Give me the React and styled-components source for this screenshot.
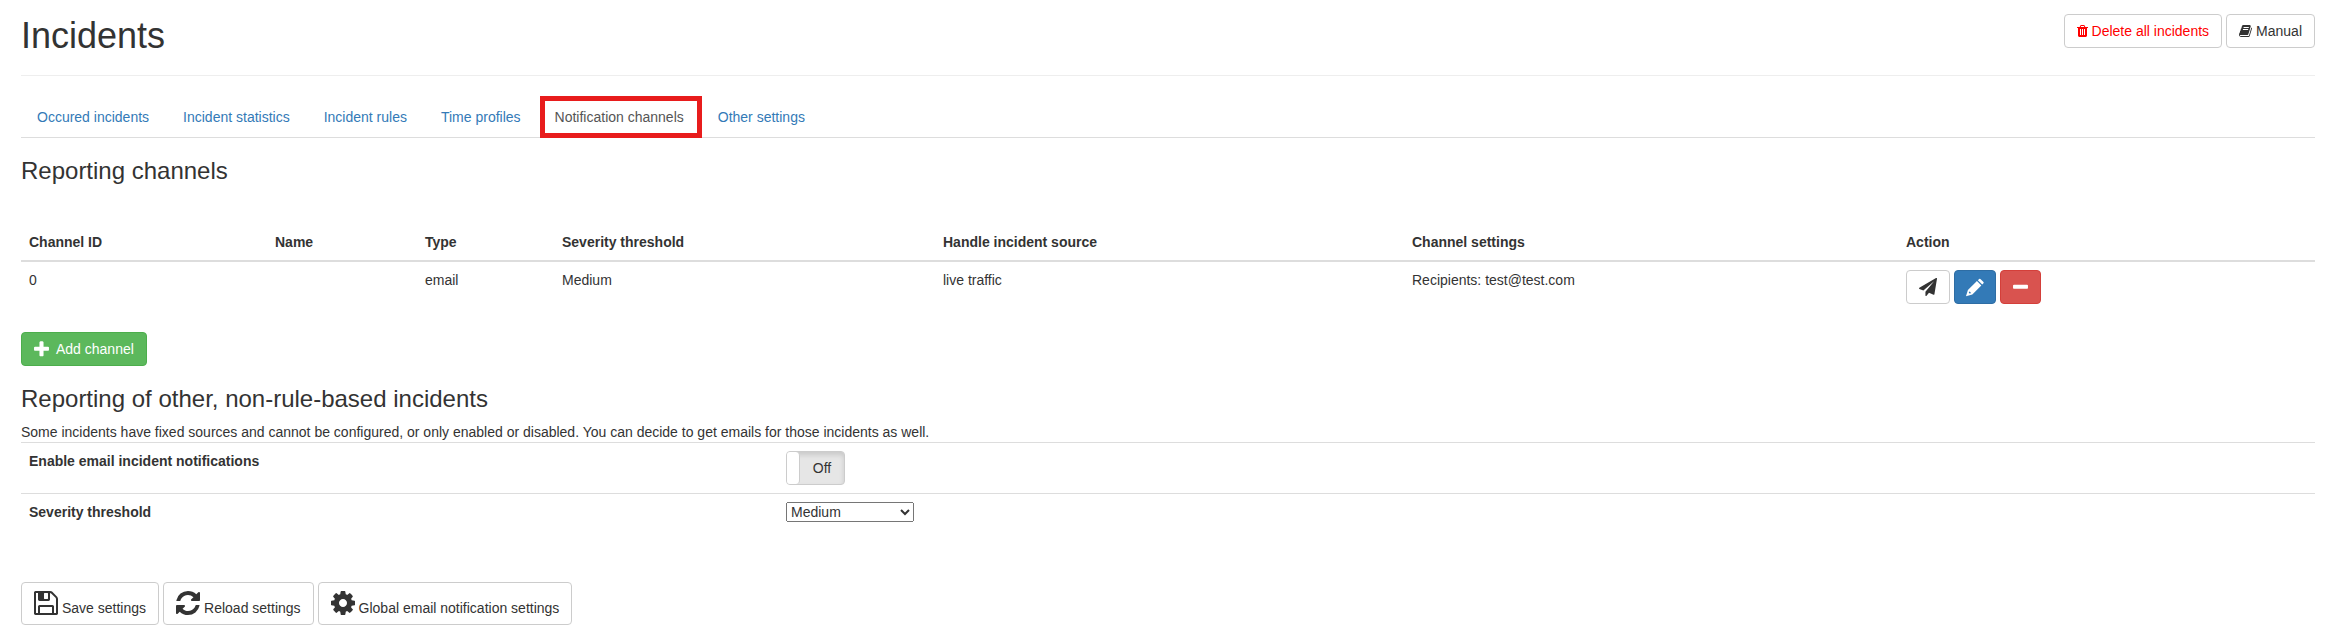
import React, { useState } from 'react';
import styled, { createGlobalStyle, css } from 'styled-components';

const GlobalStyle = createGlobalStyle`
  * {
    box-sizing: border-box;
  }
  body {
    margin: 0;
    background: #fff;
    color: #333;
    font-family: "Liberation Sans", Arial, sans-serif;
    font-size: 14px;
    line-height: 20px;
  }
`;

// [left edge, width, path] on the 1792 unit icon grid
const icons = {
  trash: [192, 1408, 'M704 1376v-704q0-14-9-23t-23-9h-64q-14 0-23 9t-9 23v704q0 14 9 23t23 9h64q14 0 23-9t9-23zm256 0v-704q0-14-9-23t-23-9h-64q-14 0-23 9t-9 23v704q0 14 9 23t23 9h64q14 0 23-9t9-23zm256 0v-704q0-14-9-23t-23-9h-64q-14 0-23 9t-9 23v704q0 14 9 23t23 9h64q14 0 23-9t9-23zm-544-992h448l-48-117q-7-9-17-11h-317q-10 2-17 11zm928 32v64q0 14-9 23t-23 9h-96v948q0 83-47 143.5t-113 60.5h-832q-66 0-113-58.5t-47-141.5v-952h-96q-14 0-23-9t-9-23v-64q0-14 9-23t23-9h309l70-167q15-37 54-63t79-26h320q40 0 79 26t54 63l70 167h309q14 0 23 9t9 23z'],
  book: [64, 1664, 'M1703 478q40 57 18 129l-275 906q-19 64-76.5 107.5t-122.5 43.5h-923q-77 0-148.5-53.5t-99.5-131.5q-24-67-2-127 0-4 3-27t4-37q1-8-3-21.5t-3-19.5q2-11 8-21t16.5-23.5 16.5-23.5q23-38 45-91.5t30-91.5q3-10 .5-30t-.5-28q3-11 17-28t17-23q21-36 42-92t25-90q1-9-2.5-32t.5-28q4-13 22-30.5t22-22.5q19-26 42.5-84.5t27.5-96.5q1-8-3-25.5t-2-26.5q2-8 9-18t18-23 17-21q8-12 16.5-30.5t15-35 16-36 19.5-32 26.5-23.5 36-11.5 47.5 5.5l-1 3q38-9 51-9h761q74 0 114 56t18 130l-274 906q-36 119-71.5 153.5t-128.5 34.5h-869q-27 0-38 15-11 16-1 43 24 70 144 70h923q29 0 56-15.5t35-41.5l300-987q7-22 5-57 38 15 59 43zm-1064 2q-4 13 2 22.5t20 9.5h608q13 0 25.5-9.5t16.5-22.5l21-64q4-13-2-22.5t-20-9.5h-608q-13 0-25.5 9.5t-16.5 22.5zm-83 256q-4 13 2 22.5t20 9.5h608q13 0 25.5-9.5t16.5-22.5l21-64q4-13-2-22.5t-20-9.5h-608q-13 0-25.5 9.5t-16.5 22.5z'],
  send: [0, 1792, 'M1764 11q33 24 27 64l-256 1536q-5 29-32 45-14 8-31 8-11 0-24-5l-453-185-242 295q-18 23-49 23-13 0-22-4-19-7-30.5-23.5t-11.5-36.5v-349l864-1059-1069 925-395-162q-37-14-40-55-2-40 32-59l1664-960q15-9 32-9 20 0 36 11z'],
  pencil: [128, 1536, 'M1170 190L1290 70Q1350 20 1415 70L1710 365Q1765 430 1710 490L1590 610ZM1085 275L1505 695L640 1560L30 1740L215 1130ZM340 1270L300 1400L375 1480L505 1440L455 1325Z'],
  minus: [192, 1408, 'M1600 736v192q0 40-28 68t-68 28h-1216q-40 0-68-28t-28-68v-192q0-40 28-68t68-28h1216q40 0 68 28t28 68z'],
  plus: [192, 1408, 'M1600 736v192q0 40-28 68t-68 28h-416v416q0 40-28 68t-68 28h-192q-40 0-68-28t-28-68v-416h-416q-40 0-68-28t-28-68v-192q0-40 28-68t68-28h416v-416q0-40 28-68t68-28h192q40 0 68 28t28 68v416h416q40 0 68 28t28 68z'],
  save: [128, 1536, 'M512 1536h768v-384h-768v384zm896 0h128v-896q0-14-10-38.5t-20-34.5l-281-281q-10-10-34-20t-39-10v416q0 40-28 68t-68 28h-576q-40 0-68-28t-28-68v-416h-128v1280h128v-416q0-40 28-68t68-28h832q40 0 68 28t28 68v416zm-384-928v-320q0-13-9.5-22.5t-22.5-9.5h-192q-13 0-22.5 9.5t-9.5 22.5v320q0 13 9.5 22.5t22.5 9.5h192q13 0 22.5-9.5t9.5-22.5zm640 32v928q0 40-28 68t-68 28h-1344q-40 0-68-28t-28-68v-1344q0-40 28-68t68-28h928q40 0 88 20t76 48l280 280q28 28 48 76t20 88z'],
  reload: [128, 1536, 'M1639 1056q0 5-1 7-64 268-268 434.5t-478 166.5q-146 0-282.5-55t-243.5-157l-129 129q-19 19-45 19t-45-19-19-45v-448q0-26 19-45t45-19h448q26 0 45 19t19 45-19 45l-137 137q71 66 161 102t187 36q134 0 250-65t186-179q11-17 53-117 8-23 30-23h192q13 0 22.5 9.5t9.5 22.5zm25-800v448q0 26-19 45t-45 19h-448q-26 0-45-19t-19-45 19-45l138-138q-148-137-349-137-134 0-250 65t-186 179q-11 17-53 117-8 23-30 23h-199q-13 0-22.5-9.5t-9.5-22.5v-7q65-268 270-434.5t480-166.5q146 0 284 55.5t245 156.5l130-129q19-19 45-19t45 19 19 45z'],
  cog: [128, 1536, 'M1152 896q0-106-75-181t-181-75-181 75-75 181 75 181 181 75 181-75 75-181zm512-109v222q0 12-8 23t-20 13l-185 28q-19 54-39 91 35 50 107 138 10 12 10 25t-9 23q-27 37-99 108t-94 71q-12 0-26-9l-138-108q-44 23-91 38-16 136-29 186-7 28-36 28h-222q-14 0-24.5-8.5t-11.5-21.5l-28-184q-49-16-90-37l-141 107q-10 9-25 9-14 0-25-11-126-114-165-168-7-10-7-23 0-12 8-23 15-21 51-66.5t54-70.5q-27-50-41-99l-183-27q-13-2-21-12.5t-8-23.5v-222q0-12 8-23t19-13l186-28q14-46 39-92-40-57-107-138-10-12-10-24 0-10 9-23 26-36 98.5-107.5t94.5-71.5q13 0 26 10l138 107q44-23 91-38 16-136 29-186 7-28 36-28h222q14 0 24.5 8.5t11.5 21.5l28 184q49 16 90 37l142-107q9-9 24-9 13 0 25 10 129 119 165 170 7 8 7 22 0 12-8 23-15 21-51 66.5t-54 70.5q26 50 41 98l183 28q13 2 21 12.5t8 23.5z'],
};

const Icon = ({ name, size = 14 }) => {
  const [left, width, path] = icons[name];
  return (
    <svg
      aria-hidden="true"
      width={Math.round((size * width) / 1792)}
      height={size}
      viewBox={`${left} 0 ${width} 1792`}
      fill="currentColor"
      fillRule="evenodd"
      overflow="visible"
    >
      <path d={path} />
    </svg>
  );
};

const tabs = [
  'Occured incidents',
  'Incident statistics',
  'Incident rules',
  'Time profiles',
  'Notification channels',
  'Other settings',
];

const channels = [
  { id: 0, name: '', type: 'email', severity: 'Medium', source: 'live traffic', settings: 'Recipients: test@test.com' },
];

const App = () => {
  const [activeTab, setActiveTab] = useState('Notification channels');
  const [enabled, setEnabled] = useState(false);
  const [severity, setSeverity] = useState('Medium');

  return (
    <Page>
      <GlobalStyle />
      <Header>
        <Title>Incidents</Title>
        <ButtonRow>
          <Button type="button" $variant="warning"><Icon name="trash" />Delete all incidents</Button>
          <Button type="button"><Icon name="book" />Manual</Button>
        </ButtonRow>
      </Header>

      <Tabs>
        {tabs.map((tab) => (
          <Tab key={tab} href="#" $active={tab === activeTab} onClick={() => setActiveTab(tab)}>
            {tab}
          </Tab>
        ))}
      </Tabs>

      <SectionTitle>Reporting channels</SectionTitle>
      <ChannelTable>
        <colgroup>
          <Col $share={246} />
          <Col $share={150} />
          <Col $share={137} />
          <Col $share={381} />
          <Col $share={469} />
          <Col $share={494} />
          <Col $share={417} />
        </colgroup>
        <thead>
          <tr>
            <th>Channel ID</th>
            <th>Name</th>
            <th>Type</th>
            <th>Severity threshold</th>
            <th>Handle incident source</th>
            <th>Channel settings</th>
            <th>Action</th>
          </tr>
        </thead>
        <tbody>
          {channels.map((channel) => (
            <tr key={channel.id}>
              <td>{channel.id}</td>
              <td>{channel.name}</td>
              <td>{channel.type}</td>
              <td>{channel.severity}</td>
              <td>{channel.source}</td>
              <td>{channel.settings}</td>
              <td>
                <ButtonRow>
                  <Button type="button" aria-label="Send test"><Icon name="send" size={18} /></Button>
                  <Button type="button" aria-label="Edit" $variant="primary"><Icon name="pencil" size={19} /></Button>
                  <Button type="button" aria-label="Remove" $variant="danger"><Icon name="minus" size={19} /></Button>
                </ButtonRow>
              </td>
            </tr>
          ))}
        </tbody>
      </ChannelTable>

      <Button type="button" $variant="success"><Icon name="plus" size={19} />Add channel</Button>

      <SectionTitle>Reporting of other, non-rule-based incidents</SectionTitle>
      <Description>
        Some incidents have fixed sources and cannot be configured, or only enabled or disabled. You can decide to get
        emails for those incidents as well.
      </Description>
      <SettingRow>
        <SettingLabel htmlFor="enable-notifications">Enable email incident notifications</SettingLabel>
        <Toggle>
          <ToggleInput
            id="enable-notifications"
            type="checkbox"
            checked={enabled}
            onChange={(e) => setEnabled(e.target.checked)}
          />
          <ToggleHandle />
          <ToggleText>{enabled ? 'On' : 'Off'}</ToggleText>
        </Toggle>
      </SettingRow>
      <SettingRow>
        <SettingLabel htmlFor="severity">Severity threshold</SettingLabel>
        <Select id="severity" value={severity} onChange={(e) => setSeverity(e.target.value)}>
          <option>Low</option>
          <option>Medium</option>
          <option>High</option>
        </Select>
      </SettingRow>

      <Footer>
        <Button type="button" $large><Icon name="save" size={28} />Save settings</Button>
        <Button type="button" $large><Icon name="reload" size={28} />Reload settings</Button>
        <Button type="button" $large><Icon name="cog" size={28} />Global email notification settings</Button>
      </Footer>
    </Page>
  );
};

export default App;

const Page = styled.main`
  padding: 14px 13px 16px 21px;
`;

const Header = styled.header`
  display: flex;
  justify-content: space-between;
  align-items: flex-start;
  padding-bottom: 19px;
  border-bottom: 1px solid #eee;
`;

const Title = styled.h1`
  margin: 2px 0 0;
  font-size: 36px;
  font-weight: normal;
  line-height: 40px;
`;

const ButtonRow = styled.div`
  display: flex;
  gap: 4px;
`;

const variants = {
  primary: css`
    color: #fff;
    background: #337ab7;
    border-color: #2e6da4;
  `,
  danger: css`
    color: #fff;
    background: #d9534f;
    border-color: #d43f3a;
  `,
  success: css`
    gap: 7px;
    color: #fff;
    background: #5cb85c;
    border-color: #4cae4c;
  `,
  warning: css`
    color: #f00;
  `,
};

const Button = styled.button`
  display: inline-flex;
  align-items: center;
  gap: 4px;
  min-height: 34px;
  padding: 6px 12px;
  border: 1px solid #ccc;
  border-radius: 4px;
  background: #fff;
  color: #333;
  font: inherit;
  white-space: nowrap;
  cursor: pointer;
  ${({ $variant }) => variants[$variant]}
  ${({ $large }) =>
    $large &&
    css`
      align-items: flex-end;
      min-height: 43px;

      svg {
        align-self: flex-start;
      }
    `}
`;

const Tabs = styled.nav`
  display: flex;
  gap: 2px;
  margin-top: 20px;
  border-bottom: 1px solid #ddd;
`;

const Tab = styled.a`
  padding: 11px 16px 10px;
  color: #337ab7;
  text-decoration: none;
  ${({ $active }) =>
    $active &&
    css`
      margin: 0 -2px -1px 1px;
      padding: 6px 13px 6px 10px;
      border: 5px solid #e81c1c;
      color: #555;
    `}
`;

const SectionTitle = styled.h2`
  margin: 20px 0 10px;
  font-size: 24px;
  font-weight: normal;
  line-height: 26px;
`;

const ChannelTable = styled.table`
  width: 100%;
  margin: 40px 0 20px;
  border-collapse: collapse;
  table-layout: fixed;

  th,
  td {
    padding: 8px;
    text-align: left;
    vertical-align: top;
  }

  th {
    border-bottom: 2px solid #ddd;
  }
`;

const Col = styled.col`
  width: ${({ $share }) => ($share / 2294) * 100}%;
`;

const Description = styled.p`
  margin: 0;
`;

const SettingRow = styled.div`
  display: grid;
  grid-template-columns: 33% 1fr;
  align-items: start;
  padding: 8px 0;
  border-top: 1px solid #ddd;

  > * {
    margin: 0 8px;
  }
`;

const SettingLabel = styled.label`
  font-weight: bold;
`;

const Toggle = styled.label`
  display: flex;
  justify-self: start;
  width: 59px;
  height: 34px;
  overflow: hidden;
  border: 1px solid #ccc;
  border-radius: 4px;
  background: #e6e6e6;
  box-shadow: inset 0 3px 5px rgba(0, 0, 0, 0.125);
  cursor: pointer;
`;

const ToggleInput = styled.input`
  position: absolute;
  opacity: 0;
`;

const ToggleHandle = styled.span`
  width: 13px;
  border-right: 1px solid #ccc;
  border-radius: 0 4px 4px 0;
  background: #fff;
`;

const ToggleText = styled.span`
  flex: 1;
  line-height: 32px;
  text-align: center;
`;

const Select = styled.select`
  justify-self: start;
  width: 128px;
  height: 20px;
  color: #333;
  font: inherit;
`;

const Footer = styled.footer`
  display: flex;
  gap: 4px;
  margin-top: 52px;
`;
